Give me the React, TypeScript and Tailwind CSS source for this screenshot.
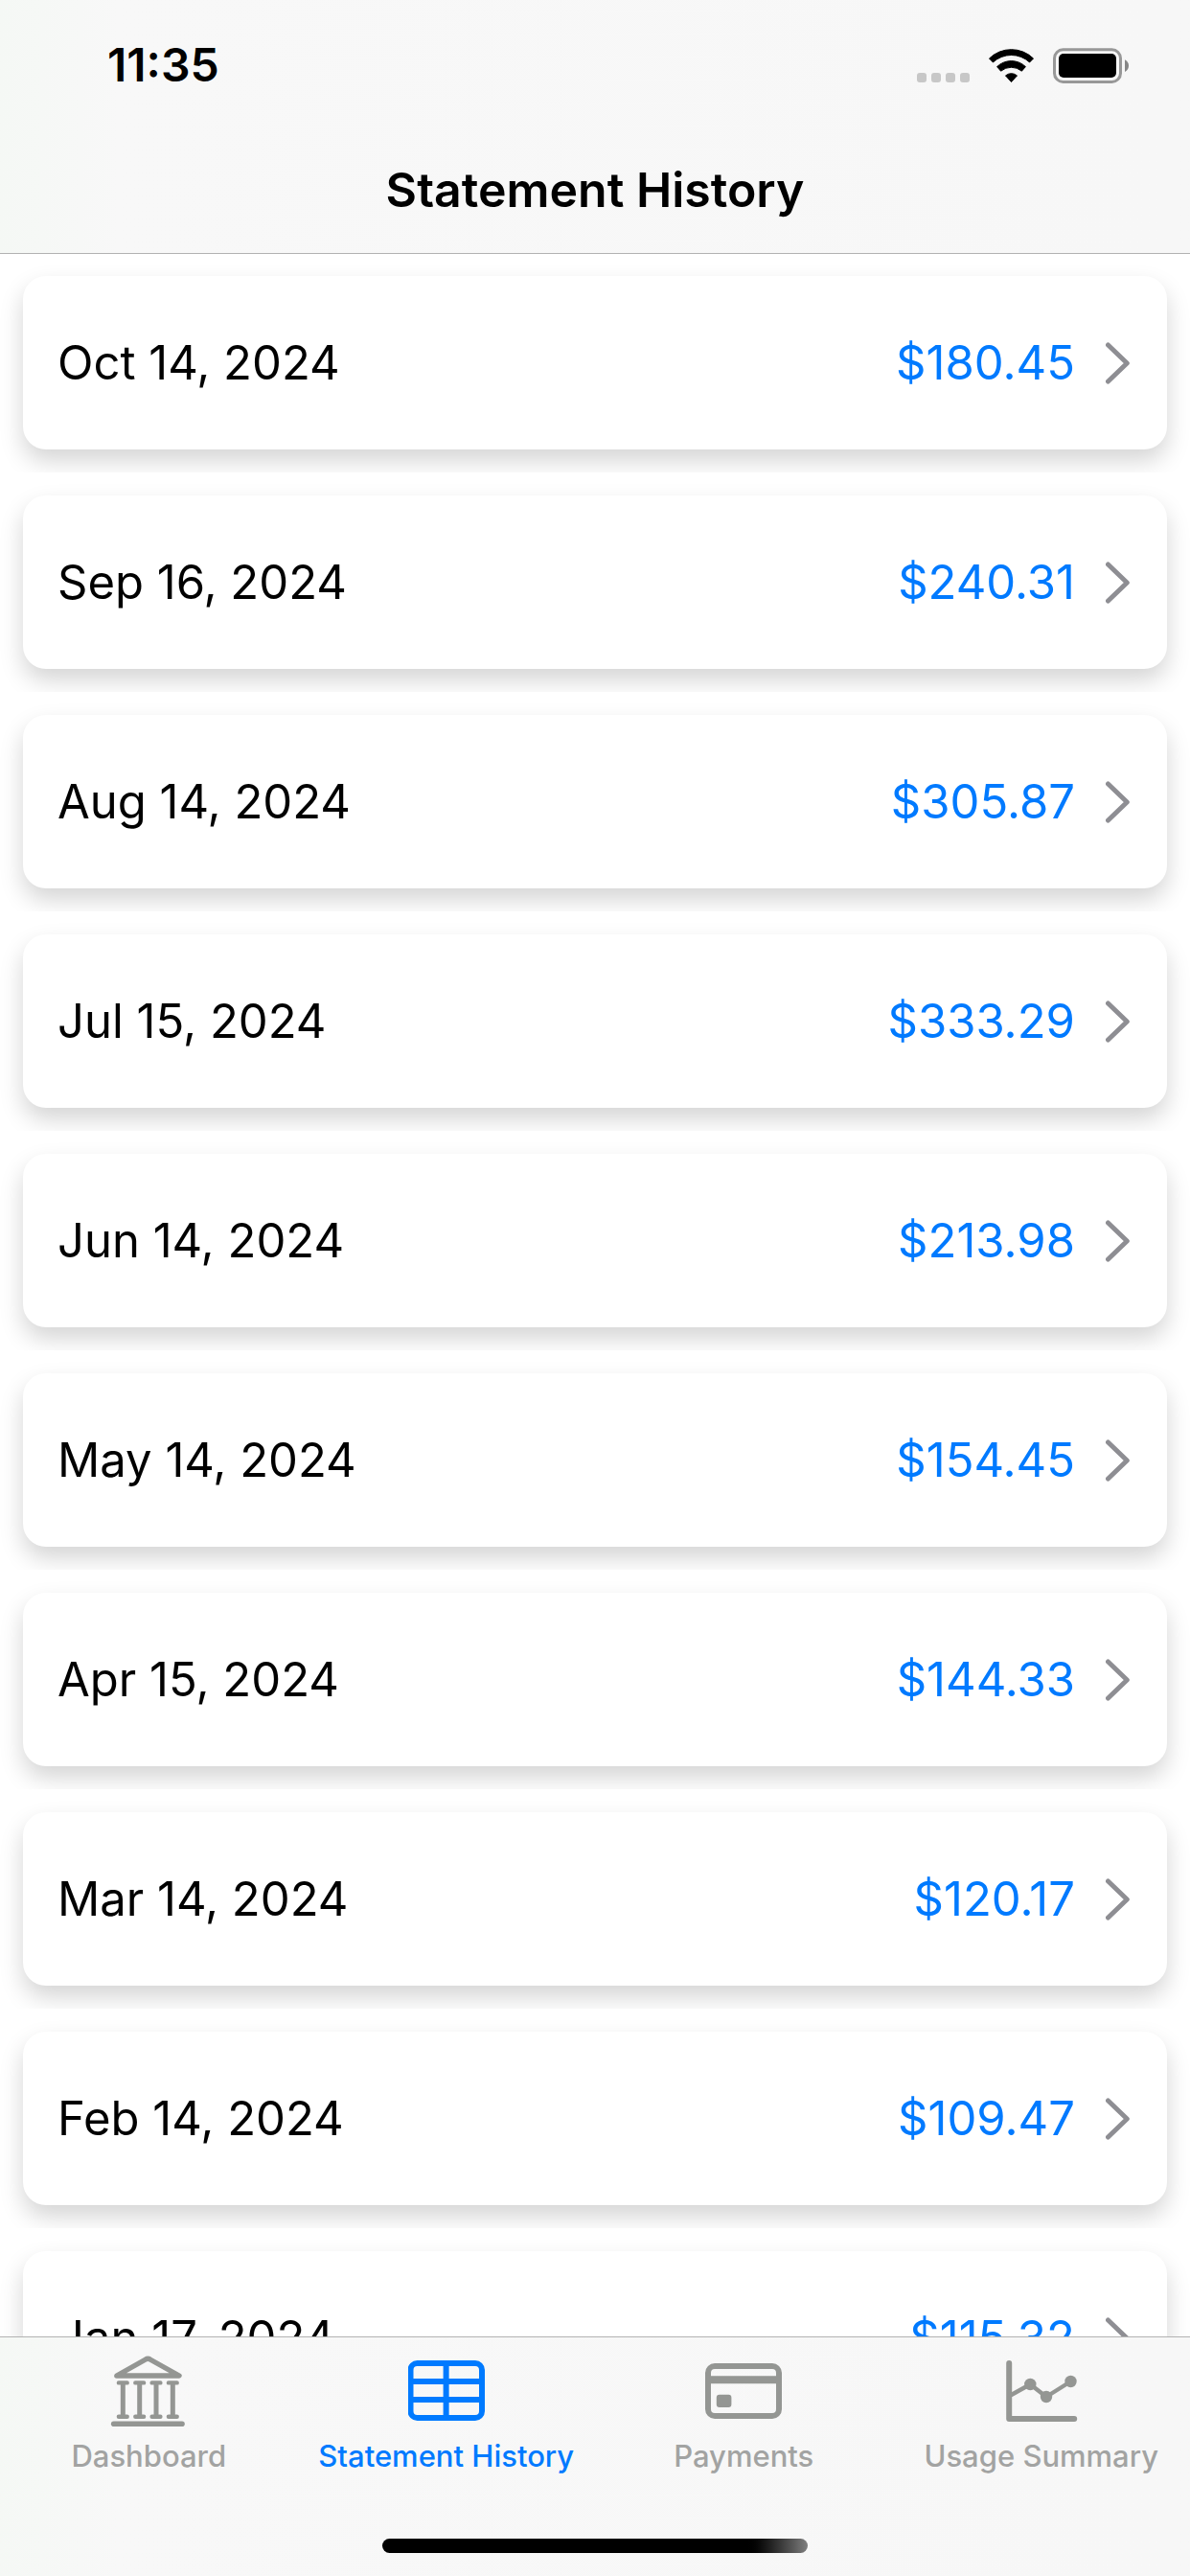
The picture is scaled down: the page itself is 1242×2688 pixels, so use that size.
import type { ReactNode } from "react";

const statements = [
  { date: "Oct 14, 2024", amount: "$180.45" },
  { date: "Sep 16, 2024", amount: "$240.31" },
  { date: "Aug 14, 2024", amount: "$305.87" },
  { date: "Jul 15, 2024", amount: "$333.29" },
  { date: "Jun 14, 2024", amount: "$213.98" },
  { date: "May 14, 2024", amount: "$154.45" },
  { date: "Apr 15, 2024", amount: "$144.33" },
  { date: "Mar 14, 2024", amount: "$120.17" },
  { date: "Feb 14, 2024", amount: "$109.47" },
  { date: "Jan 17, 2024", amount: "$115.32" },
];

const columns = [13.3, 30.7, 48, 65.3];

const BankIcon = () => (
  <svg viewBox="0 0 80 80" className="size-20" fill="none" stroke="currentColor" strokeLinecap="round" strokeLinejoin="round">
    <path d="M6.8 24 L37 7 Q39.3 5.3 41.6 7 L72 24 Z" strokeWidth="5.4" />
    {columns.map((x) => (
      <g key={x}>
        <path d={`M${x - 4.4} 31.4 h8.8 M${x - 4.4} 66.8 h8.8`} strokeWidth="4.4" />
        <path d={`M${x} 31.4 V66.8`} strokeWidth="5" strokeLinecap="butt" />
      </g>
    ))}
    <path d="M3.7 74.3 H75" strokeWidth="5.6" />
  </svg>
);

const TableIcon = () => (
  <svg viewBox="0 0 80 80" className="size-20" fill="none" stroke="currentColor" strokeWidth="6">
    <rect x="2.5" y="11" width="74.5" height="57" rx="7" />
    <path d="M39.6 11 V68 M2.5 30 H77 M2.5 49 H77" />
  </svg>
);

const CardIcon = () => (
  <svg viewBox="0 0 80 80" className="size-20" fill="none" stroke="currentColor" strokeWidth="6">
    <rect x="3" y="14" width="74" height="52" rx="7" />
    <path d="M3 28.2 H77" strokeWidth="8" />
    <rect x="11.8" y="43.8" width="15.6" height="13.2" rx="3" fill="currentColor" stroke="none" />
  </svg>
);

const ChartIcon = () => (
  <svg viewBox="0 0 80 80" className="size-20" fill="none" stroke="currentColor" strokeLinecap="round" strokeLinejoin="round">
    <path d="M6.2 11 V69 H74.2" strokeWidth="6" />
    <path d="M8.5 44 L28.3 33 L45 46 L70.5 30" strokeWidth="4.4" />
    <g fill="currentColor" stroke="none">
      <circle cx="28.3" cy="33" r="6.2" />
      <circle cx="45" cy="46" r="6.2" />
      <circle cx="70.5" cy="30" r="6.2" />
    </g>
  </svg>
);

const tabs: { name: string; icon: ReactNode; active?: boolean }[] = [
  { name: "Dashboard", icon: <BankIcon /> },
  { name: "Statement History", icon: <TableIcon />, active: true },
  { name: "Payments", icon: <CardIcon /> },
  { name: "Usage Summary", icon: <ChartIcon /> },
];

const StatusBar = () => (
  <div className="flex h-[132px] items-center justify-between pt-1 pr-16 pl-28">
    <span className="text-5xl leading-none font-semibold">11:35</span>
    <div className="flex items-center gap-5">
      {/* No signal */}
      <svg viewBox="0 0 55 37" className="h-[37px] w-[55px]" fill="#c7c7c7">
        {[0, 15, 30, 45].map((x) => (
          <rect key={x} x={x} y="26" width="10" height="10" rx="3" />
        ))}
      </svg>
      {/* Wifi */}
      <svg viewBox="0 0 47 37" className="h-[37px] w-[47px]" stroke="#000" strokeWidth="1" strokeLinejoin="round">
        <path d="M0.5 11 A33 33 0 0 1 46.5 11 L42.6 15 A28 28 0 0 0 4.4 15 Z" />
        <path d="M8.6 19.6 A21.5 21.5 0 0 1 38.4 19.6 L34.4 24.2 A17 17 0 0 0 12.6 24.2 Z" />
        <path d="M17.5 28.9 A10 10 0 0 1 29.5 28.9 L23.5 35.5 Z" />
      </svg>
      {/* Battery */}
      <svg viewBox="0 0 79 37" className="h-[37px] w-[79px]">
        <rect x="1.5" y="1.8" width="69" height="33.6" rx="9" fill="none" stroke="#989898" strokeWidth="3" />
        <rect x="6" y="6" width="60" height="25" rx="5" />
        <path d="M75 12.3 Q79 14.5 79 18.6 Q79 22.7 75 25 Z" fill="#868686" />
      </svg>
    </div>
  </div>
);

const App = () => {
  return (
    <div className="flex h-screen flex-col overflow-hidden bg-white font-[Inter,sans-serif] text-black">
      <header className="relative z-10 shrink-0 border-b border-[#b2b2b2] bg-linear-to-r from-[#f5f8f5] via-[#f8f8f8] via-10% to-[#f7f7f7]">
        <StatusBar />
        <div className="flex h-[132px] items-center justify-center">
          <h1 className="text-[50px] leading-none font-semibold">Statement History</h1>
        </div>
      </header>

      {/* Statement list */}
      <main className="-mt-px min-h-0 flex-1 overflow-hidden">
        <ul>
          {statements.map((item) => (
            <li key={item.date} className="overflow-hidden p-6">
              <button
                type="button"
                className="flex h-[181px] w-full items-center rounded-3xl bg-white px-9 text-[49px] leading-none shadow-[0_12px_24px_rgba(0,0,0,0.17)]"
              >
                <span>{item.date}</span>
                <span className="ml-auto text-[#007aff]">{item.amount}</span>
                <svg
                  viewBox="0 0 28 44"
                  className="ml-8 h-11 w-7"
                  fill="none"
                  stroke="#8e8e93"
                  strokeWidth="5"
                  strokeLinecap="round"
                  strokeLinejoin="round"
                >
                  <path d="M2.5 3 L22.3 22 L2.5 41" />
                </svg>
              </button>
            </li>
          ))}
        </ul>
      </main>

      {/* Tab bar */}
      <footer className="relative z-10 shrink-0 border-t border-[#b2b2b2] bg-linear-to-r from-[#f5f8f5] via-[#f8f8f8] via-10% to-[#f7f7f7] pb-6">
        <nav className="grid grid-cols-4 pt-4">
          {tabs.map((tab) => (
            <a
              key={tab.name}
              href="#"
              className={`flex flex-col items-center gap-2 ${tab.active ? "text-[#007aff]" : "text-[#949693]"}`}
            >
              {tab.icon}
              <span
                className={`text-[31px] leading-10 font-medium whitespace-nowrap ${tab.active ? "" : "text-[#a2a3a2]"}`}
              >
                {tab.name}
              </span>
            </a>
          ))}
        </nav>
        <div className="mx-auto mt-[66px] h-[15px] w-[444px] rounded-full bg-linear-to-r from-black from-85% to-[#808080]"></div>
      </footer>
    </div>
  );
};

export default App;
